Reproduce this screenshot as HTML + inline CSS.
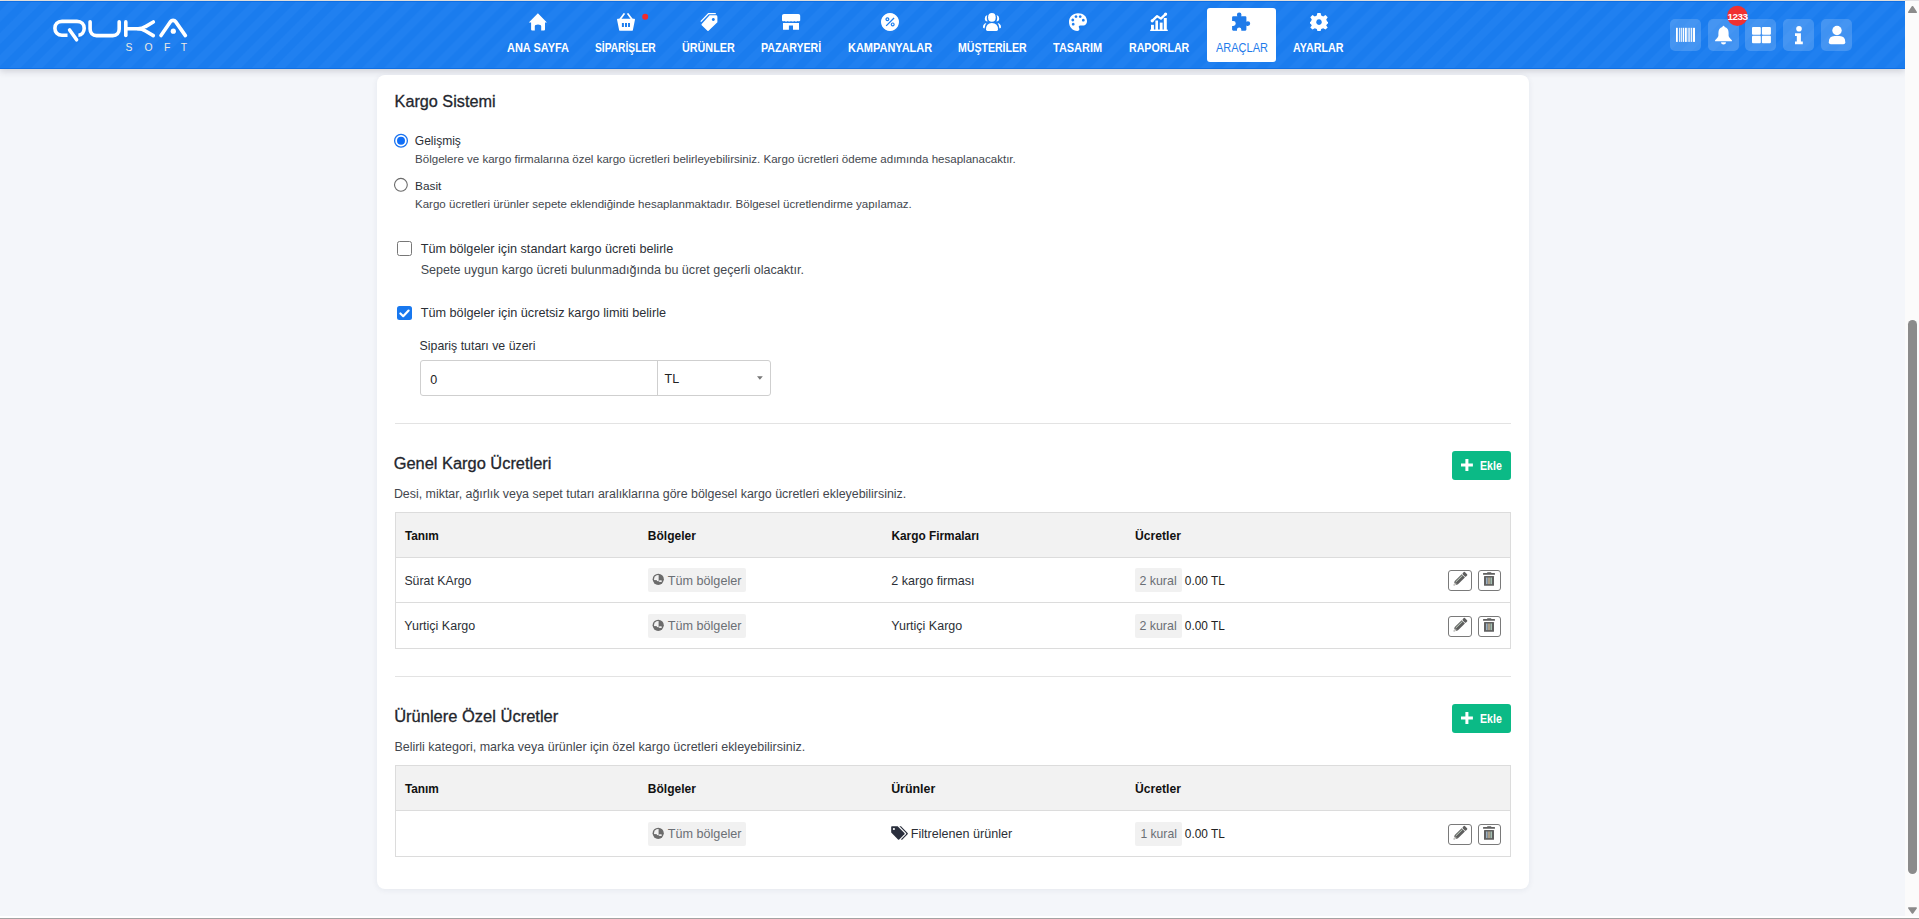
<!DOCTYPE html>
<html lang="tr">
<head>
<meta charset="utf-8">
<title>Kargo Sistemi</title>
<style>
html,body{margin:0;padding:0;}
body{width:1919px;height:919px;overflow:hidden;position:relative;background:#f4f6fa;font-family:"Liberation Sans",sans-serif;}
.t{position:absolute;white-space:pre;font-family:"Liberation Sans",sans-serif;}
.abs{position:absolute;}
#topline{position:absolute;left:0;top:0;width:1905px;height:1px;background:#ebe7e2;}
#header{position:absolute;left:0;top:1px;width:1905px;height:68px;
  background:repeating-linear-gradient(135deg,#1a7cee 0px,#1a7cee 6.3px,#2080f0 7.8px,#2080f0 14.1px,#1a7cee 15.6px);
  box-shadow:0 2px 7px rgba(40,40,60,.20);}
#header .edge{position:absolute;left:0;width:100%;height:1px;background:#0f6fe4;}
.navact{position:absolute;left:1207px;top:8px;width:69px;height:54px;background:#fff;border-radius:3px;}
.rbox{position:absolute;top:19px;width:31px;height:32px;border-radius:5px;background:rgba(255,255,255,.17);}
#card{position:absolute;left:377px;top:75px;width:1152px;height:814px;background:#fff;border-radius:8px;
  box-shadow:0 1px 6px rgba(30,40,70,.07);}
.hr{position:absolute;left:395px;width:1116px;height:1px;background:#e3e3e3;}
.tbl{position:absolute;left:395px;width:1114px;border:1px solid #dcdcdc;}
.thead{position:absolute;left:0;top:0;width:100%;height:44px;background:#f2f2f2;border-bottom:1px solid #dcdcdc;}
.rowline{position:absolute;left:0;width:100%;height:1px;background:#dcdcdc;}
.badge{position:absolute;height:24px;background:#f1f1f1;border-radius:2px;}
.btn{position:absolute;width:22px;height:19px;border:1px solid #7a7a7a;border-radius:3px;background:#fff;}
.ekle{position:absolute;left:1452px;width:59px;height:29px;background:#0bba86;border-radius:3px;}
#sb{position:absolute;left:1905px;top:1px;width:14px;height:915px;background:#fbfbfb;}
#thumb{position:absolute;left:1908px;top:320px;width:9px;height:554px;background:#8b8b8b;border-radius:5px;}
#botline{position:absolute;left:0;top:918px;width:1919px;height:1px;background:#a3a3a3;}
</style>
</head>
<body>
<div id="topline"></div><div class="abs" style="left:1905px;top:0;width:14px;height:1px;background:#e2e2e6"></div>
<div id="header">
  <div class="edge" style="top:0"></div>
  <div class="edge" style="bottom:0"></div>
</div>
<div class="navact"></div>

<!-- logo -->
<svg class="abs" style="left:0;top:0" width="200" height="60" viewBox="0 0 200 60">
  <g fill="none" stroke="#fff" stroke-width="3.6" stroke-linecap="round" stroke-linejoin="round">
    <path d="M67.5,35.2 L62,35.2 C57.6,35.2 54.9,32.2 54.9,28.3 C54.9,24.4 57.6,21.4 62,21.4 L77,21.4 C81.4,21.4 84.2,24.4 84.2,28.3 C84.2,32 81.8,35 78.4,35.2" stroke-linecap="butt"/>
    <path d="M69.6,30 L76.6,39.8"/>
    <path d="M90.1,21.8 L90.1,29 C90.1,33 92.6,35.6 96.5,35.6 L112.8,35.6 C116.7,35.6 119.2,33 119.2,29 L119.2,21.8"/>
    <path d="M125.8,21.9 L125.8,35.4"/>
    <path d="M127,28.8 L138,28.8 C141.5,28.8 143.5,27.9 145.5,26.6 L153.3,22"/>
    <path d="M138,28.8 C141.5,28.8 143.5,29.7 145.5,31 L153.3,35.6"/>
    <path d="M161,35.6 L170.6,21.6 C171.8,19.9 174.4,19.9 175.6,21.6 L185.4,35.6"/>
  </g>
  <circle cx="173.3" cy="31.2" r="2.6" fill="#fff"/>
  <text y="50.6" fill="#ece9e4" font-family="Liberation Sans" font-size="10.4"><tspan x="125.6">S</tspan><tspan x="144.4">O</tspan><tspan x="164">F</tspan><tspan x="180.8">T</tspan></text>
</svg>

<!-- nav icons -->
<svg class="abs" style="left:0;top:0" width="1400" height="40" viewBox="0 0 1400 40">
  <g fill="#fff">
    <!-- home -->
    <path d="M528.8,22.6 L537.9,13.2 L546.9,22.6 L545,22.6 L545,29.4 Q545,30.4 544,30.4 L541.2,30.4 L541.2,26.3 Q541.2,24.6 538,24.6 Q534.8,24.6 534.8,26.3 L534.8,30.4 L532.1,30.4 Q531.1,30.4 531.1,29.4 L531.1,22.6 Z"/>
    <!-- basket -->
    <path fill-rule="evenodd" d="M617,19.4 Q617,18.7 617.8,18.7 L634.2,18.7 Q635,18.7 635,19.4 L632.9,29.9 Q632.7,30.8 631.8,30.8 L620.2,30.8 Q619.3,30.8 619.1,29.9 Z M621.9,22.9 L623.9,22.9 L623.9,26.9 L621.9,26.9 Z M625,22.9 L627,22.9 L627,26.9 L625,26.9 Z M628,22.9 L630,22.9 L630,26.9 L628,26.9 Z"/>
    <path d="M619.2,19 L623.7,13 L625.2,13.8 L621.4,19 Z M632.8,19 L628.3,13 L626.8,13.8 L630.6,19 Z"/>
    <!-- tag -->
    <path fill-rule="evenodd" d="M709.6,15.3 L716,15.3 Q717.4,15.3 717.4,16.7 L717.4,22.3 L708.6,30.8 Q708,31.3 707.4,30.8 L701.7,25.2 Q701.2,24.6 701.7,24 Z M713.3,18.1 A1.5,1.5 0 1,0 713.31,18.1 Z"/>
    <path d="M700.3,21.2 L708.2,13 L715.8,13 L715.8,14.2 L708.8,14.2 L701.3,22 Z"/>
    <!-- store -->
    <path d="M784,14 L798.4,14 Q800.2,14 800.2,15.8 L800.2,20.4 Q799,21.8 797.6,21 Q796,22 794.3,21 Q792.6,22 791,21 Q789.4,22 787.8,21 Q786.2,22 784.6,21 Q783,21.8 782,20.4 L782,15.8 Q782,14 784,14 Z"/>
    <path d="M783,22.9 L799,22.9 L799,29.8 L793,29.8 L793,25.4 L788.9,25.4 L788.9,29.8 L783,29.8 Z"/>
    <!-- percent circle -->
    <path fill-rule="evenodd" d="M890,13 A9,9 0 1,1 889.99,13 Z M893.6,17.6 L894.5,18.4 L886.6,26.2 L885.7,25.4 Z M887.4,17.2 A2,2 0 1,0 887.41,17.2 Z M892.7,22.4 A2,2 0 1,0 892.71,22.4 Z"/>
    <circle cx="887.4" cy="19.2" r="0.8"/><circle cx="892.7" cy="24.4" r="0.8"/>
    <!-- users -->
    <ellipse cx="991.9" cy="17.4" rx="3.8" ry="4.4"/>
    <path d="M986,29.6 Q986,23 991.9,23 Q998,23 998,29.6 Q998,30.9 996.6,30.9 L987.4,30.9 Q986,30.9 986,29.6 Z"/>
    <path d="M987.3,14.9 Q984.8,15.6 984.8,18.4 Q984.8,21.2 987.6,21.4 Q986.8,20 986.8,18 Q986.8,16.2 987.3,14.9 Z"/>
    <path d="M996.6,14.9 Q999.2,15.6 999.2,18.4 Q999.2,21.2 996.4,21.4 Q997.2,20 997.2,18 Q997.2,16.2 996.6,14.9 Z"/>
    <path d="M986.4,23.1 Q983,23.8 983,27.2 Q983,28.2 984.5,28.4 Q984.9,25 986.4,23.1 Z"/>
    <path d="M997.6,23.1 Q1001,23.8 1001,27.2 Q1001,28.2 999.5,28.4 Q999.1,25 997.6,23.1 Z"/>
    <!-- palette -->
    <path fill-rule="evenodd" d="M1078,13.2 C1083.4,13.2 1087,16.6 1087,20.9 C1087,24.5 1084.5,25.6 1082,25.6 L1080.2,25.6 C1078.9,25.6 1078.4,26.6 1079,27.8 C1079.6,29 1079.8,30.9 1077.4,30.9 C1072.6,30.9 1069,27 1069,22 C1069,17 1072.8,13.2 1078,13.2 Z M1076,15.2 A1.4,1.4 0 1,0 1076.01,15.2 Z M1080.2,15.2 A1.4,1.4 0 1,0 1080.21,15.2 Z M1072.8,18.6 A1.4,1.4 0 1,0 1072.81,18.6 Z M1083.3,18.8 A1.4,1.4 0 1,0 1083.31,18.8 Z M1073.2,22.8 A1.4,1.4 0 1,0 1073.21,22.8 Z"/>
    <!-- chart -->
    <rect x="1151" y="24.8" width="2.9" height="5.7"/>
    <rect x="1155.4" y="20.5" width="2.6" height="10"/>
    <rect x="1159.8" y="22.6" width="2.8" height="7.9"/>
    <rect x="1163.8" y="18" width="3" height="12.5"/>
    <rect x="1150.1" y="29.4" width="17.7" height="1.5" rx="0.5"/>
    <path d="M1152.2,20.8 L1157.1,16.1 L1160.9,18.6 L1165.6,14.1" fill="none" stroke="#fff" stroke-width="2.3" stroke-linecap="round" stroke-linejoin="round"/>
    <circle cx="1152.2" cy="20.8" r="1.6"/><circle cx="1165.6" cy="14.1" r="1.6"/>
    <!-- cog -->
    <path fill-rule="evenodd" d="M1317.4,13 L1320.6,13 L1321.2,15.6 L1323.2,16.5 L1325.5,15 L1327.7,17.2 L1326.2,19.5 L1327.1,21.4 L1328,21.9 L1328,23.4 L1327.1,23.9 L1326.2,25.4 L1327.7,27.4 L1325.5,29.6 L1323.2,28.2 L1321.2,29.1 L1320.6,31 L1317.4,31 L1316.8,29.1 L1314.8,28.2 L1312.5,29.6 L1310.3,27.4 L1311.8,25.4 L1310.9,23.9 L1310,23.4 L1310,21.9 L1310.9,21.4 L1311.8,19.5 L1310.3,17.2 L1312.5,15 L1314.8,16.5 L1316.8,15.6 Z M1319,19.3 A2.8,2.8 0 1,0 1319.01,19.3 Z"/>
  </g>
  <circle cx="645.2" cy="16.7" r="3" fill="#f22b2b"/>
  <!-- puzzle (blue) -->
  <path fill="#1f7bea" d="M1233.2,16.2 L1237.4,16.2 Q1236.9,15.4 1236.9,14.9 A2.3,2.3 0 0,1 1241.5,14.9 Q1241.5,15.4 1241,16.2 L1245.3,16.2 Q1246.4,16.2 1246.4,17.3 L1246.4,21.7 Q1247.2,21.2 1247.8,21.2 A2.4,2.4 0 0,1 1247.8,26 Q1247.2,26 1246.4,25.5 L1246.4,29.6 Q1246.4,30.7 1245.3,30.7 L1241.3,30.7 L1241.3,29.6 A2.15,2.15 0 0,0 1237,29.6 L1237,30.7 L1233.2,30.7 Q1232.1,30.7 1232.1,29.6 L1232.1,26 L1233.3,26 A2.45,2.45 0 0,0 1233.3,21.1 L1232.1,21.1 L1232.1,17.3 Q1232.1,16.2 1233.2,16.2 Z"/>
</svg>

<!-- right icons -->
<div class="rbox" style="left:1670px"></div>
<div class="rbox" style="left:1708px"></div>
<div class="rbox" style="left:1745px"></div>
<div class="rbox" style="left:1783px"></div>
<div class="rbox" style="left:1821px"></div>
<svg class="abs" style="left:1660px;top:0" width="200" height="60" viewBox="1660 0 200 60">
  <g fill="#fff">
    <!-- barcode -->
    <rect x="1676" y="27.8" width="1.8" height="14.1"/>
    <rect x="1679.2" y="27.8" width="1.1" height="14.1"/>
    <rect x="1681.2" y="27.8" width="0.9" height="14.1"/>
    <rect x="1682.8" y="27.8" width="1.4" height="14.1"/>
    <rect x="1685" y="27.8" width="1.8" height="14.1"/>
    <rect x="1687.7" y="27.8" width="0.9" height="14.1"/>
    <rect x="1689.3" y="27.8" width="1" height="14.1"/>
    <rect x="1691.1" y="27.8" width="0.9" height="14.1"/>
    <rect x="1692.8" y="27.8" width="2.2" height="14.1"/>
    <!-- bell -->
    <path d="M1723.5,25.8 Q1724.5,25.8 1724.6,27 Q1728.6,28 1728.6,33 L1728.6,35.6 Q1728.6,37.4 1731.9,40.2 L1731.9,41.3 L1715.1,41.3 L1715.1,40.2 Q1718.4,37.4 1718.4,35.6 L1718.4,33 Q1718.4,28 1722.4,27 Q1722.5,25.8 1723.5,25.8 Z"/>
    <path d="M1721,42.2 L1726,42.2 Q1726,44.5 1723.5,44.5 Q1721,44.5 1721,42.2 Z"/>
    <!-- grid -->
    <rect x="1752" y="26.9" width="8.8" height="7.8" rx="1"/>
    <rect x="1761.9" y="26.9" width="9" height="7.8" rx="1"/>
    <rect x="1752" y="35.7" width="8.8" height="7.6" rx="1"/>
    <rect x="1761.9" y="35.7" width="9" height="7.6" rx="1"/>
    <!-- info -->
    <circle cx="1799" cy="28.7" r="2.8"/>
    <path d="M1795,33.2 L1800.9,33.2 L1800.9,41.4 L1802.8,41.4 L1802.8,44.3 L1795,44.3 L1795,41.4 L1796.8,41.4 L1796.8,36 L1795,36 Z"/>
    <!-- user -->
    <circle cx="1837" cy="30.5" r="4.7"/>
    <path d="M1828.8,42.3 Q1828.8,36.1 1834.6,36.1 L1839.5,36.1 Q1845.3,36.1 1845.3,42.3 Q1845.3,44.3 1843.3,44.3 L1830.8,44.3 Q1828.8,44.3 1828.8,42.3 Z"/>
  </g>
  <circle cx="1737.3" cy="15.9" r="10.2" fill="#f03131"/>
  <text x="1737.6" y="20" text-anchor="middle" fill="#fff" font-family="Liberation Sans" font-weight="700" font-size="9.9" letter-spacing="-0.5">1233</text>
</svg>

<!-- card -->
<div id="card"></div>

<!-- radios -->
<svg class="abs" style="left:390px;top:130px" width="30" height="70" viewBox="390 130 30 70">
  <circle cx="401" cy="140.8" r="6.4" fill="#fff" stroke="#1a73f0" stroke-width="1.3"/>
  <circle cx="401" cy="140.8" r="4" fill="#0f6ef7"/>
  <circle cx="400.9" cy="184.8" r="6.4" fill="#fff" stroke="#6a6a6a" stroke-width="1.1"/>
</svg>
<!-- checkboxes -->
<div class="abs" style="left:397px;top:241px;width:13px;height:12.5px;border:1px solid #777;border-radius:2.5px;background:#fff;"></div>
<div class="abs" style="left:397px;top:306px;width:15px;height:14.2px;background:#1878ef;border-radius:2.5px;"></div>
<svg class="abs" style="left:397px;top:306px" width="15" height="15" viewBox="0 0 15 15">
  <path d="M3.4,7.5 L6.2,10.2 L11.6,4.6" fill="none" stroke="#fff" stroke-width="2.2" stroke-linecap="round" stroke-linejoin="round"/>
</svg>

<!-- input group -->
<div class="abs" style="left:420px;top:360px;width:349px;height:34px;border:1px solid #cfcfcf;border-radius:3px;background:#fff;"></div>
<div class="abs" style="left:657px;top:361px;width:1px;height:34px;background:#cfcfcf;"></div>
<svg class="abs" style="left:750px;top:370px" width="20" height="15" viewBox="750 370 20 15">
  <path d="M757,376.3 L762.8,376.3 L759.9,379.8 Z" fill="#777"/>
</svg>

<div class="hr" style="top:423px"></div>
<div class="hr" style="top:676px"></div>

<!-- Ekle buttons -->
<div class="ekle" style="top:451px"></div>
<div class="ekle" style="top:704px"></div>
<svg class="abs" style="left:1455px;top:445px" width="30" height="300" viewBox="1455 445 30 300">
  <g fill="#fff">
    <rect x="1465.4" y="459" width="3" height="12"/><rect x="1461" y="463.5" width="11.9" height="3"/>
    <rect x="1465.4" y="712" width="3" height="12"/><rect x="1461" y="716.5" width="11.9" height="3"/>
  </g>
</svg>

<!-- table 1 -->
<div class="tbl" style="top:512px;height:135px;">
  <div class="thead"></div>
  <div class="rowline" style="top:89px"></div>
</div>
<!-- table 2 -->
<div class="tbl" style="top:765px;height:90px;">
  <div class="thead"></div>
</div>

<!-- badges -->
<div class="badge" style="left:648px;top:568px;width:98px;"></div>
<div class="badge" style="left:648px;top:614px;width:98px;"></div>
<div class="badge" style="left:648px;top:822px;width:98px;"></div>
<div class="badge" style="left:1135px;top:568px;width:47px;"></div>
<div class="badge" style="left:1135px;top:614px;width:47px;"></div>
<div class="badge" style="left:1135px;top:822px;width:47px;"></div>

<!-- buttons -->
<div class="btn" style="left:1448px;top:570px"></div>
<div class="btn" style="left:1478px;top:570px;width:21px"></div>
<div class="btn" style="left:1448px;top:616px"></div>
<div class="btn" style="left:1478px;top:616px;width:21px"></div>
<div class="btn" style="left:1448px;top:824px"></div>
<div class="btn" style="left:1478px;top:824px;width:21px"></div>

<svg class="abs" style="left:0;top:0" width="1905" height="919" viewBox="0 0 1905 919">
  <defs><clipPath id="gclip"><circle cx="0" cy="0" r="4.2"/></clipPath></defs>
  <g transform="translate(658.25,579.3)">
      <circle cx="0" cy="0" r="5.6" fill="#6b6b6b"/>
      <g clip-path="url(#gclip)" fill="#f1f1f1">
        <rect x="-6" y="-6" width="6.4" height="6.8"/>
        <rect x="-1.4" y="0.7" width="1.8" height="1.1"/>
      </g>
      <ellipse cx="2.1" cy="1.8" rx="1.8" ry="0.95" fill="#f1f1f1"/>
    </g>
  <g transform="translate(658.2,625.3)">
      <circle cx="0" cy="0" r="5.6" fill="#6b6b6b"/>
      <g clip-path="url(#gclip)" fill="#f1f1f1">
        <rect x="-6" y="-6" width="6.4" height="6.8"/>
        <rect x="-1.4" y="0.7" width="1.8" height="1.1"/>
      </g>
      <ellipse cx="2.1" cy="1.8" rx="1.8" ry="0.95" fill="#f1f1f1"/>
    </g>
  <g transform="translate(658.2,833.3)">
      <circle cx="0" cy="0" r="5.6" fill="#6b6b6b"/>
      <g clip-path="url(#gclip)" fill="#f1f1f1">
        <rect x="-6" y="-6" width="6.4" height="6.8"/>
        <rect x="-1.4" y="0.7" width="1.8" height="1.1"/>
      </g>
      <ellipse cx="2.1" cy="1.8" rx="1.8" ry="0.95" fill="#f1f1f1"/>
    </g>
  <g transform="translate(1453.6,585.4)">
      <g transform="rotate(-44.5)">
        <path d="M0,0 L3.6,-2.3 L3.6,2.3 Z" fill="#5e5e5e"/>
        <path d="M1.1,-0.55 L2.6,-1.4 L2.6,1.4 L1.1,0.55 Z" fill="#f0f0ea"/>
        <rect x="3.6" y="-2.3" width="10" height="4.6" fill="#5e5e5e"/>
        <rect x="4.2" y="-1.3" width="9" height="0.8" fill="#c9d8c8"/>
        <rect x="14.3" y="-2.3" width="3.2" height="4.6" rx="0.9" fill="#5e5e5e"/>
      </g>
    </g>
  <g transform="translate(1453.6,631.4)">
      <g transform="rotate(-44.5)">
        <path d="M0,0 L3.6,-2.3 L3.6,2.3 Z" fill="#5e5e5e"/>
        <path d="M1.1,-0.55 L2.6,-1.4 L2.6,1.4 L1.1,0.55 Z" fill="#f0f0ea"/>
        <rect x="3.6" y="-2.3" width="10" height="4.6" fill="#5e5e5e"/>
        <rect x="4.2" y="-1.3" width="9" height="0.8" fill="#c9d8c8"/>
        <rect x="14.3" y="-2.3" width="3.2" height="4.6" rx="0.9" fill="#5e5e5e"/>
      </g>
    </g>
  <g transform="translate(1453.6,839.4)">
      <g transform="rotate(-44.5)">
        <path d="M0,0 L3.6,-2.3 L3.6,2.3 Z" fill="#5e5e5e"/>
        <path d="M1.1,-0.55 L2.6,-1.4 L2.6,1.4 L1.1,0.55 Z" fill="#f0f0ea"/>
        <rect x="3.6" y="-2.3" width="10" height="4.6" fill="#5e5e5e"/>
        <rect x="4.2" y="-1.3" width="9" height="0.8" fill="#c9d8c8"/>
        <rect x="14.3" y="-2.3" width="3.2" height="4.6" rx="0.9" fill="#5e5e5e"/>
      </g>
    </g>
  <g transform="translate(1483.3,572.6)">
      <rect x="-0.3" y="0.4" width="12" height="1.8" rx="0.6" fill="#606060"/>
      <rect x="3.7" y="-0.3" width="4.4" height="1.4" rx="0.7" fill="#606060"/>
      <rect x="0.7" y="3.5" width="10" height="9.6" rx="0.5" fill="#606060"/>
      <rect x="3" y="4.9" width="1.1" height="6.6" fill="#b8d4ee"/>
      <rect x="5.15" y="4.9" width="1.1" height="6.6" fill="#e8d2a8"/>
      <rect x="7.3" y="4.9" width="1.1" height="6.6" fill="#c4e8d4"/>
    </g>
  <g transform="translate(1483.3,618.6)">
      <rect x="-0.3" y="0.4" width="12" height="1.8" rx="0.6" fill="#606060"/>
      <rect x="3.7" y="-0.3" width="4.4" height="1.4" rx="0.7" fill="#606060"/>
      <rect x="0.7" y="3.5" width="10" height="9.6" rx="0.5" fill="#606060"/>
      <rect x="3" y="4.9" width="1.1" height="6.6" fill="#b8d4ee"/>
      <rect x="5.15" y="4.9" width="1.1" height="6.6" fill="#e8d2a8"/>
      <rect x="7.3" y="4.9" width="1.1" height="6.6" fill="#c4e8d4"/>
    </g>
  <g transform="translate(1483.3,826.6)">
      <rect x="-0.3" y="0.4" width="12" height="1.8" rx="0.6" fill="#606060"/>
      <rect x="3.7" y="-0.3" width="4.4" height="1.4" rx="0.7" fill="#606060"/>
      <rect x="0.7" y="3.5" width="10" height="9.6" rx="0.5" fill="#606060"/>
      <rect x="3" y="4.9" width="1.1" height="6.6" fill="#b8d4ee"/>
      <rect x="5.15" y="4.9" width="1.1" height="6.6" fill="#e8d2a8"/>
      <rect x="7.3" y="4.9" width="1.1" height="6.6" fill="#c4e8d4"/>
    </g>
  <!-- tags icon -->
  <path fill="#2a2f3d" d="M891.2,827 Q891.2,826.3 891.9,826.3 L897.6,826.3 L904.4,833 Q905,833.6 904.4,834.2 L899.2,839.4 Q898.6,840 898,839.4 L891.2,832.6 Z"/>
  <circle cx="893.9" cy="829" r="1.1" fill="#fff"/>
  <path d="M899.4,826.3 L901,826.3 L907.6,833 Q908.2,833.6 907.6,834.2 L902.4,839.4 Q901.8,840 901.2,839.4 L901,839.2 L906,834.2 Q906.6,833.6 906,833 Z" fill="#2a2f3d"/>
</svg>

<div class="t" style="left:507.39px;top:41.00px;font-size:12.200px;line-height:15px;font-weight:700;color:#fff;transform:scaleX(0.9010);transform-origin:0 0">ANA SAYFA</div>
<div class="t" style="left:595.39px;top:41.00px;font-size:12.200px;line-height:15px;font-weight:700;color:#fff;transform:scaleX(0.8394);transform-origin:0 0">SİPARİŞLER</div>
<div class="t" style="left:682.39px;top:41.00px;font-size:12.200px;line-height:15px;font-weight:700;color:#fff;transform:scaleX(0.8852);transform-origin:0 0">ÜRÜNLER</div>
<div class="t" style="left:761.19px;top:41.00px;font-size:12.200px;line-height:15px;font-weight:700;color:#fff;transform:scaleX(0.8721);transform-origin:0 0">PAZARYERİ</div>
<div class="t" style="left:847.99px;top:41.00px;font-size:12.200px;line-height:15px;font-weight:700;color:#fff;transform:scaleX(0.9001);transform-origin:0 0">KAMPANYALAR</div>
<div class="t" style="left:958.09px;top:41.00px;font-size:12.200px;line-height:15px;font-weight:700;color:#fff;transform:scaleX(0.8663);transform-origin:0 0">MÜŞTERİLER</div>
<div class="t" style="left:1053.29px;top:41.00px;font-size:12.200px;line-height:15px;font-weight:700;color:#fff;transform:scaleX(0.8999);transform-origin:0 0">TASARIM</div>
<div class="t" style="left:1128.89px;top:41.00px;font-size:12.200px;line-height:15px;font-weight:700;color:#fff;transform:scaleX(0.8722);transform-origin:0 0">RAPORLAR</div>
<div class="t" style="left:1215.58px;top:41.00px;font-size:12.400px;line-height:15px;font-weight:400;color:#1f7bea;transform:scaleX(0.8880);transform-origin:0 0">ARAÇLAR</div>
<div class="t" style="left:1293.39px;top:41.00px;font-size:12.200px;line-height:15px;font-weight:700;color:#fff;transform:scaleX(0.8815);transform-origin:0 0">AYARLAR</div>
<div class="t" style="left:394.59px;top:92.00px;font-size:16.232px;line-height:19px;font-weight:400;color:#23262d;-webkit-text-stroke:0.3px #23262d">Kargo Sistemi</div>
<div class="t" style="left:414.80px;top:134.00px;font-size:12.034px;line-height:14px;font-weight:400;color:#2b2f36">Gelişmiş</div>
<div class="t" style="left:415.02px;top:152.00px;font-size:11.560px;line-height:14px;font-weight:400;color:#43474e">Bölgelere ve kargo firmalarına özel kargo ücretleri belirleyebilirsiniz. Kargo ücretleri ödeme adımında hesaplanacaktır.</div>
<div class="t" style="left:415.11px;top:179.00px;font-size:11.845px;line-height:14px;font-weight:400;color:#2b2f36">Basit</div>
<div class="t" style="left:415.02px;top:197.00px;font-size:11.547px;line-height:14px;font-weight:400;color:#43474e">Kargo ücretleri ürünler sepete eklendiğinde hesaplanmaktadır. Bölgesel ücretlendirme yapılamaz.</div>
<div class="t" style="left:420.67px;top:242.00px;font-size:12.671px;line-height:15px;font-weight:400;color:#2b2f36">Tüm bölgeler için standart kargo ücreti belirle</div>
<div class="t" style="left:420.67px;top:263.00px;font-size:12.577px;line-height:15px;font-weight:400;color:#43474e">Sepete uygun kargo ücreti bulunmadığında bu ücret geçerli olacaktır.</div>
<div class="t" style="left:420.67px;top:306.00px;font-size:12.691px;line-height:15px;font-weight:400;color:#2b2f36">Tüm bölgeler için ücretsiz kargo limiti belirle</div>
<div class="t" style="left:419.58px;top:339.00px;font-size:12.340px;line-height:15px;font-weight:400;color:#2b2f36">Sipariş tutarı ve üzeri</div>
<div class="t" style="left:430.27px;top:373.00px;font-size:12.500px;line-height:15px;font-weight:400;color:#222">0</div>
<div class="t" style="left:664.58px;top:372.00px;font-size:12.500px;line-height:15px;font-weight:400;color:#222">TL</div>
<div class="t" style="left:393.68px;top:453.00px;font-size:16.426px;line-height:20px;font-weight:400;color:#23262d;-webkit-text-stroke:0.3px #23262d">Genel Kargo Ücretleri</div>
<div class="t" style="left:393.88px;top:487.00px;font-size:12.423px;line-height:15px;font-weight:400;color:#43474e">Desi, miktar, ağırlık veya sepet tutarı aralıklarına göre bölgesel kargo ücretleri ekleyebilirsiniz.</div>
<div class="t" style="left:394.17px;top:706.00px;font-size:16.501px;line-height:20px;font-weight:400;color:#23262d;-webkit-text-stroke:0.3px #23262d">Ürünlere Özel Ücretler</div>
<div class="t" style="left:394.38px;top:740.00px;font-size:12.495px;line-height:15px;font-weight:400;color:#43474e">Belirli kategori, marka veya ürünler için özel kargo ücretleri ekleyebilirsiniz.</div>
<div class="t" style="left:404.91px;top:529.00px;font-size:11.856px;line-height:14px;font-weight:700;color:#111">Tanım</div>
<div class="t" style="left:647.80px;top:529.00px;font-size:12.005px;line-height:14px;font-weight:700;color:#111">Bölgeler</div>
<div class="t" style="left:1134.99px;top:529.00px;font-size:12.179px;line-height:15px;font-weight:700;color:#111">Ücretler</div>
<div class="t" style="left:404.91px;top:782.00px;font-size:11.856px;line-height:14px;font-weight:700;color:#111">Tanım</div>
<div class="t" style="left:647.80px;top:782.00px;font-size:12.005px;line-height:14px;font-weight:700;color:#111">Bölgeler</div>
<div class="t" style="left:1134.99px;top:782.00px;font-size:12.179px;line-height:15px;font-weight:700;color:#111">Ücretler</div>
<div class="t" style="left:891.41px;top:529.00px;font-size:11.870px;line-height:14px;font-weight:700;color:#111">Kargo Firmaları</div>
<div class="t" style="left:891.13px;top:782.00px;font-size:12.424px;line-height:15px;font-weight:700;color:#111">Ürünler</div>
<div class="t" style="left:404.38px;top:574.00px;font-size:12.324px;line-height:15px;font-weight:400;color:#2b2f36">Sürat KArgo</div>
<div class="t" style="left:891.37px;top:574.00px;font-size:12.571px;line-height:15px;font-weight:400;color:#2b2f36">2 kargo firması</div>
<div class="t" style="left:404.37px;top:619.00px;font-size:12.511px;line-height:15px;font-weight:400;color:#2b2f36">Yurtiçi Kargo</div>
<div class="t" style="left:891.37px;top:619.00px;font-size:12.511px;line-height:15px;font-weight:400;color:#2b2f36">Yurtiçi Kargo</div>
<div class="t" style="left:910.87px;top:827.00px;font-size:12.573px;line-height:15px;font-weight:400;color:#2b2f36">Filtrelenen ürünler</div>
<div class="t" style="left:667.77px;top:574.00px;font-size:12.634px;line-height:15px;font-weight:400;color:#6b6f75">Tüm bölgeler</div>
<div class="t" style="left:667.77px;top:619.00px;font-size:12.634px;line-height:15px;font-weight:400;color:#6b6f75">Tüm bölgeler</div>
<div class="t" style="left:667.77px;top:827.00px;font-size:12.634px;line-height:15px;font-weight:400;color:#6b6f75">Tüm bölgeler</div>
<div class="t" style="left:1139.38px;top:574.00px;font-size:12.438px;line-height:15px;font-weight:400;color:#6b6f75">2 kural</div>
<div class="t" style="left:1139.38px;top:619.00px;font-size:12.438px;line-height:15px;font-weight:400;color:#6b6f75">2 kural</div>
<div class="t" style="left:1140.39px;top:827.00px;font-size:12.172px;line-height:15px;font-weight:400;color:#6b6f75">1 kural</div>
<div class="t" style="left:1184.81px;top:574.00px;font-size:11.858px;line-height:14px;font-weight:400;color:#222">0.00 TL</div>
<div class="t" style="left:1184.81px;top:619.00px;font-size:11.858px;line-height:14px;font-weight:400;color:#222">0.00 TL</div>
<div class="t" style="left:1184.81px;top:827.00px;font-size:11.858px;line-height:14px;font-weight:400;color:#222">0.00 TL</div>
<div class="t" style="left:1479.89px;top:459.00px;font-size:12.200px;line-height:15px;font-weight:700;color:#fff;transform:scaleX(0.8685);transform-origin:0 0">Ekle</div>
<div class="t" style="left:1479.89px;top:712.00px;font-size:12.200px;line-height:15px;font-weight:700;color:#fff;transform:scaleX(0.8685);transform-origin:0 0">Ekle</div>

<div id="sb"></div>
<svg class="abs" style="left:1905px;top:0" width="14" height="919" viewBox="1905 0 14 919">
  <path d="M1908.9,12.2 L1916.1,12.2 L1912.5,6.8 Z" fill="#8b8b8b" stroke="#8b8b8b" stroke-width="1.7" stroke-linejoin="round"/>
  <path d="M1908.9,908 L1916.1,908 L1912.5,912.9 Z" fill="#8b8b8b" stroke="#8b8b8b" stroke-width="1.7" stroke-linejoin="round"/>
</svg>
<div id="thumb"></div>
<div class="abs" style="left:0;top:916px;width:1919px;height:2px;background:#fff"></div>
<div id="botline"></div>
</body>
</html>
